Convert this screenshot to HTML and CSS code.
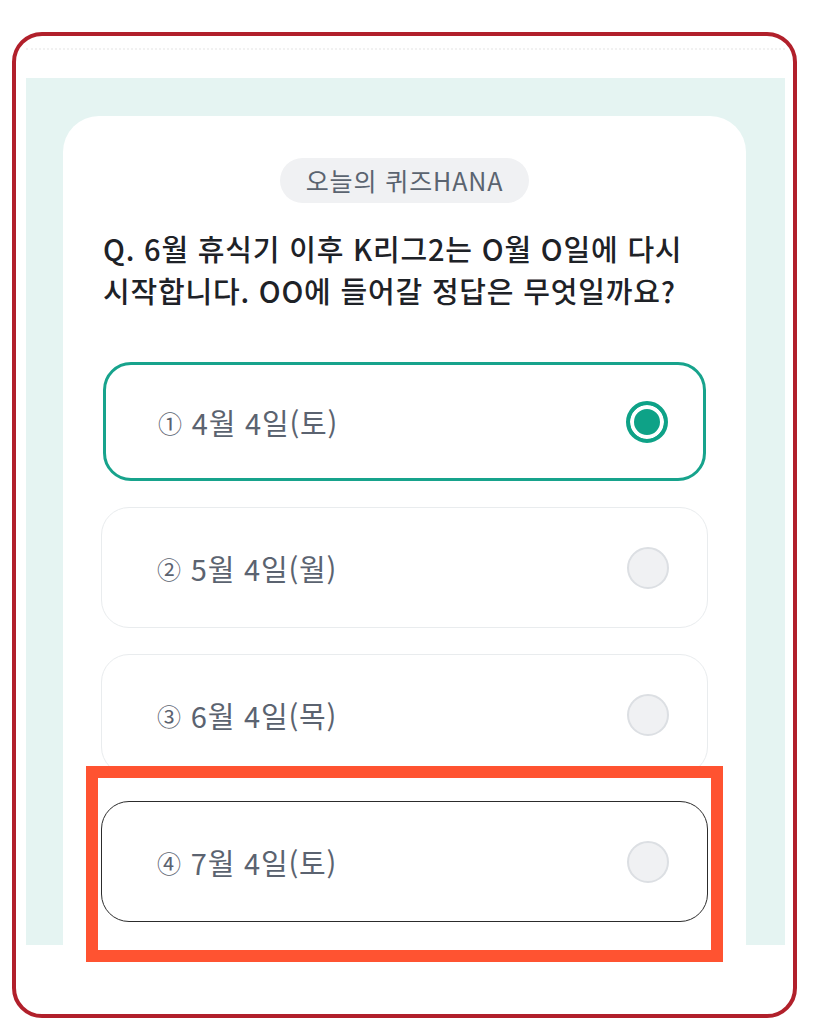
FILE: index.html
```html
<!DOCTYPE html>
<html lang="ko">

<head>
  <meta charset="utf-8">
  <meta name="viewport" content="width=device-width, initial-scale=1.0">
  <link rel="stylesheet" href="styles.css">
</head>

<body>

  <div class="frame">
    <div class="top-strip"></div>

    <div class="stage">
      <div class="card">
        <div class="badge-row">
          <span class="badge">오늘의 퀴즈HANA</span>
        </div>

        <p class="question">Q. 6월 휴식기 이후 K리그2는 O월 O일에 다시<br>시작합니다. OO에 들어갈 정답은 무엇일까요?</p>

        <ul class="options">
          <li class="option selected">
            <span class="label"><span class="num">①</span> 4월 4일(토)</span>
            <span class="radio"></span>
          </li>
          <li class="option">
            <span class="label"><span class="num">②</span> 5월 4일(월)</span>
            <span class="radio"></span>
          </li>
          <li class="option">
            <span class="label"><span class="num">③</span> 6월 4일(목)</span>
            <span class="radio"></span>
          </li>
          <li class="option focused">
            <span class="label"><span class="num">④</span> 7월 4일(토)</span>
            <span class="radio"></span>
            <div class="highlight"></div>
          </li>
        </ul>
      </div>
    </div>
  </div>

</body>

</html>
```

FILE: styles.css
```css
html,
body {
  margin: 0;
  padding: 0;
  background: #fff;
  font-family: "Noto Sans CJK KR", "Noto Sans", sans-serif;
}

.frame {
  width: 785px;
  height: 986px;
  margin: 32px 0 0 12px;
  box-sizing: border-box;
  border: 4px solid #b1202b;
  border-radius: 30px;
  overflow: hidden;
}

/* faint dotted row under the frame top */
.top-strip {
  height: 42px;
  box-sizing: border-box;
  margin: 0 8px 0 10px;
  padding-top: 12px;
}

.top-strip::before {
  content: "";
  display: block;
  border-top: 2px dotted #f1f1f1;
}

.stage {
  height: 867px;
  margin: 0 8px 0 10px;
  padding: 38px 39px 0 37px;
  box-sizing: border-box;
  background: #e5f4f2;
}

.card {
  height: 829px;
  background: #fff;
  border-radius: 36px 36px 0 0;
  padding: 42px 38px 0;
  box-sizing: border-box;
}

.badge-row {
  text-align: center;
}

.badge {
  display: inline-block;
  height: 45px;
  line-height: 45px;
  padding: 0 26px;
  border-radius: 23px;
  background: #f0f1f3;
  color: #5b6470;
  font-size: 25px;
  letter-spacing: 0.9px;
}

.question {
  margin: 24px 0 0;
  padding-left: 2px;
  font-size: 29px;
  line-height: 42px;
  font-weight: 500;
  letter-spacing: 0.8px;
  color: #1e2227;
}

.options {
  list-style: none;
  margin: 51px 0 0;
  padding: 0;
  display: flex;
  flex-direction: column;
  gap: 26px;
}

.option {
  position: relative;
  height: 121px;
  box-sizing: border-box;
  border: 1px solid #e9ecee;
  border-radius: 28px;
  padding: 0 38px 0 55px;
  display: flex;
  align-items: center;
  justify-content: space-between;
}

.label {
  font-size: 29px;
  letter-spacing: 0.8px;
  color: #5b6370;
}

.num {
  font-size: 24px;
  vertical-align: 2px;
}

.radio {
  width: 42px;
  height: 42px;
  box-sizing: border-box;
  border-radius: 50%;
  border: 2px solid #dcdfe3;
  background: #f0f1f3;
}

.selected {
  margin: 0 2px;
  height: 119px;
  border: 3px solid #17a38c;
  padding: 0 35px 0 52px;
}

.selected .radio {
  border: 4px solid #0ea287;
  background: #0ea287;
  box-shadow: inset 0 0 0 4px #fff;
}

.focused {
  border: 1.5px solid #2c2c2c;
}

/* annotation box drawn over the last option */
.highlight {
  position: absolute;
  top: -36px;
  left: -16px;
  right: -16px;
  bottom: -41px;
  border: 12px solid #ff5331;
  pointer-events: none;
}
```
